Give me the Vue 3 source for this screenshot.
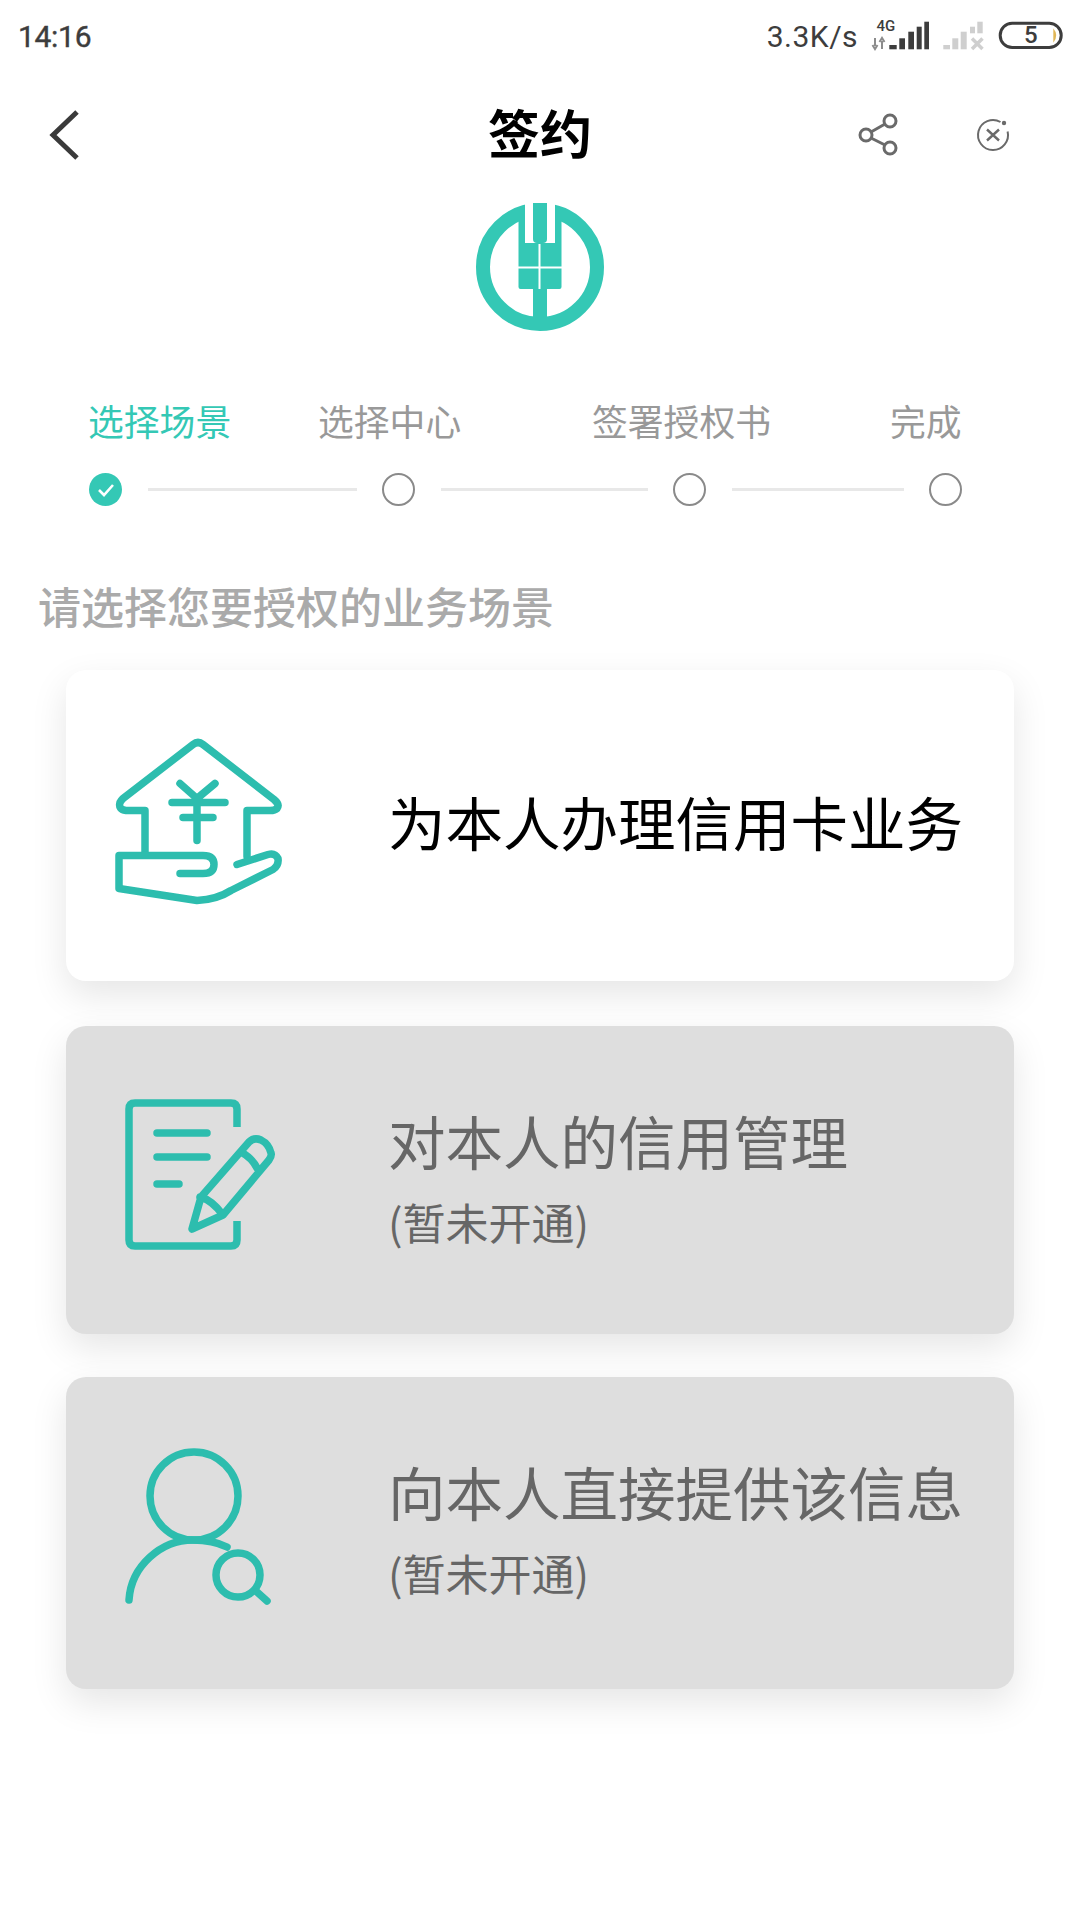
<script setup>
const steps = [
  { label: '选择场景', active: true },
  { label: '选择中心' },
  { label: '签署授权书' },
  { label: '完成' },
]
</script>

<template>
  <main class="page">
    <div class="status-bar">
      <span class="time">14:16</span>
      <div class="status-right">
        <span class="speed">3.3K/s</span>
        <svg class="status-icons" width="212" height="40" viewBox="0 0 212 40">
          <text x="16.500" y="14.700" class="net-text">4G</text>
          <path d="M15 22v8M12.500 29l2.500 4 2.500-4M22 33v-8M19.500 26l2.500-4 2.500 4" fill="none" stroke="#8c8c8c" stroke-width="2" />
          <g fill="#3d3d3d">
            <rect x="29.300" y="29" width="7.400" height="4.300" />
            <rect x="39.300" y="22.300" width="5.700" height="11" />
            <rect x="48.300" y="15.700" width="5.700" height="17.600" />
            <rect x="56.700" y="10.700" width="5" height="22.600" />
            <rect x="64.300" y="5.700" width="4.700" height="27.600" />
          </g>
          <g fill="#cfcfcf">
            <rect x="83.300" y="29" width="6.700" height="4.300" />
            <rect x="92.300" y="22.300" width="6" height="11" />
            <rect x="100.700" y="15.700" width="6" height="17.600" />
            <rect x="110" y="10.700" width="5" height="6.600" />
            <rect x="117.300" y="5.700" width="5.400" height="11.600" />
            <path d="M112 22.500l10.500 10.500M122.500 22.500L112 33" stroke="#cfcfcf" stroke-width="3.500" />
          </g>
          <rect x="140.200" y="7.200" width="61" height="24.300" rx="12" fill="none" stroke="#3d3d3d" stroke-width="3" />
          <path d="M193.300 12.300q6 7.200 0 14.400z" fill="#e0b656" />
          <text x="170.700" y="27.300" class="battery-text">5</text>
        </svg>
      </div>
    </div>

    <header class="nav">
      <svg class="back" width="34" height="52" viewBox="0 0 34 52">
        <path d="M30 3L6 26l24 23" fill="none" stroke="#3a3a3a" stroke-width="5" />
      </svg>
      <h1 class="title">签约</h1>
      <div class="nav-actions">
        <svg width="40" height="44" viewBox="0 0 40 44" fill="none" stroke="#6a6a6a" stroke-width="3">
          <circle cx="8" cy="22" r="6" />
          <circle cx="32" cy="8" r="6" />
          <circle cx="32" cy="35" r="6" />
          <path d="M13 19l14-8M13 25l14 7" />
        </svg>
        <svg width="36" height="36" viewBox="0 0 36 36" fill="none" stroke="#6a6a6a" stroke-width="2">
          <path d="M25.500 5A15 15 0 1 0 32.600 14.500" />
          <path d="M12 12.500l12 11M24 12.500l-12 11" stroke-width="2.400" />
          <circle cx="29" cy="6" r="2.200" fill="#6a6a6a" stroke="none" />
        </svg>
      </div>
    </header>

    <div class="logo-wrap">
      <svg width="128" height="130" viewBox="36 21 128 130">
        <circle cx="100" cy="86" r="57" fill="none" stroke="#34c8b5" stroke-width="14" />
        <rect x="85" y="15" width="30" height="48" rx="3" fill="#fff" />
        <path d="M78.500 28h6.500v34h30V28h6.500v78a2 2 0 0 1-2 2h-39a2 2 0 0 1-2-2z" fill="#34c8b5" />
        <path d="M93 22h14v36a4 4 0 0 1-4 4h-6a4 4 0 0 1-4-4z" fill="#34c8b5" />
        <rect x="93" y="108" width="14" height="32" fill="#34c8b5" />
        <path d="M99.500 63v45M78 86.500h44" stroke="#fff" stroke-width="2" />
      </svg>
    </div>

    <div class="step-labels">
      <span v-for="step in steps" :key="step.label" class="step-label" :class="{ active: step.active }">{{ step.label }}</span>
    </div>
    <div class="step-dots">
      <span class="dot done">
        <svg width="33" height="33" viewBox="0 0 33 33">
          <circle cx="16.500" cy="16.500" r="16.500" fill="#34c8b5" />
          <path d="M10 17l5 5 9-10" fill="none" stroke="#fff" stroke-width="2.600" />
        </svg>
      </span>
      <span class="line"></span>
      <span class="dot"></span>
      <span class="line"></span>
      <span class="dot"></span>
      <span class="line"></span>
      <span class="dot"></span>
    </div>

    <p class="prompt">请选择您要授权的业务场景</p>

    <section class="cards">
      <div class="card card-first">
        <svg class="card-icon" width="230" height="200" viewBox="0 5.500 230 200" fill="none" stroke="#2dbdae" stroke-width="7.500" stroke-linecap="round" stroke-linejoin="round">
          <path d="M55 133V90H36q-8-1-6-8 1-2 3-4l70-54q5-4 10 0l71 55q6 5 3 9-2 2-7 2h-23v46" />
          <path d="M90 63l17 15 18-15M82 82h53M93 97h30M107 78v42" />
          <path d="M147 144l31-10q7-2 10 4 1 7-5 11l-42 21q-14 9-34 10l-78-12v-33h84q11 0 11 9t-11 9H90" />
        </svg>
        <div class="card-text">
          <div class="card-title">为本人办理信用卡业务</div>
        </div>
      </div>

      <div class="card card-off">
        <svg class="card-icon" width="230" height="200" viewBox="-10 0 230 200" fill="none" stroke="#2dbdae" stroke-width="7.500" stroke-linecap="round" stroke-linejoin="round">
          <path d="M137 47V29q0-6-6-6H35q-6 0-6 6v131q0 6 6 6h96q6 0 6-6v-19" stroke-linecap="butt" />
          <path d="M57 53h50M57 77h50M57 104h22" />
          <path d="M92 149l9-32 48-55q5-5 12-2 8 4 10 13 1 3-2 7l-46 55zM100 117q12 3 23 18M141 72q11 6 16 16" />
        </svg>
        <div class="card-text">
          <div class="card-title">对本人的信用管理</div>
          <div class="card-sub">(暂未开通)</div>
        </div>
      </div>

      <div class="card card-off">
        <svg class="card-icon" width="230" height="200" viewBox="-10 3 230 200" fill="none" stroke="#2dbdae" stroke-width="7.500" stroke-linecap="round" stroke-linejoin="round">
          <circle cx="94" cy="66" r="44" />
          <path d="M29 170c2-34 32-60 64-60 12 0 24 2 34 7" />
          <circle cx="138" cy="145" r="22" />
          <path d="M157 162l10 9" />
        </svg>
        <div class="card-text">
          <div class="card-title">向本人直接提供该信息</div>
          <div class="card-sub">(暂未开通)</div>
        </div>
      </div>
    </section>
  </main>
</template>

<style>
html,
body {
  background: #fff;
}
</style>

<style scoped>
.page {
  width: 1080px;
  height: 1920px;
  overflow: hidden;
  background: #fff;
  font-family: "Noto Sans CJK SC", "Noto Sans", sans-serif;
}

.status-bar {
  height: 72px;
  display: flex;
  justify-content: space-between;
  align-items: center;
  padding: 0 8px 0 18px;
  color: #3d3d3d;
  font-family: Roboto, sans-serif;
}

.time {
  font-size: 30px;
  font-weight: 400;
  -webkit-text-stroke: 0.4px #3d3d3d;
  letter-spacing: -0.3px;
}

.status-right {
  display: flex;
  align-items: center;
}

.speed {
  font-size: 30px;
  letter-spacing: 0.5px;
}

.status-icons {
  margin-left: 2px;
}

.net-text {
  font-size: 15px;
  font-weight: 500;
  fill: #3d3d3d;
}

.battery-text {
  font-size: 24px;
  font-weight: 500;
  fill: #3d3d3d;
  text-anchor: middle;
}

.nav {
  height: 126px;
  display: grid;
  grid-template-columns: 1fr auto 1fr;
  align-items: center;
  padding: 0 69px;
}

.back {
  margin-left: -22px;
}

.title {
  margin: 0;
  padding-bottom: 7px;
  font-size: 52px;
  font-weight: 700;
  color: #000;
  line-height: 1;
}

.nav-actions {
  display: flex;
  justify-content: flex-end;
  align-items: center;
  gap: 77px;
}

.logo-wrap {
  display: flex;
  justify-content: center;
  margin-top: 4px;
}

.step-labels {
  display: grid;
  grid-template-columns: 230px 274px 298px auto;
  padding-left: 88px;
  margin-top: 62px;
}

.step-label {
  font-size: 35.800px;
  line-height: 52px;
  color: #999;
  white-space: nowrap;
}

.step-label.active {
  color: #34c8b5;
}

.step-dots {
  display: grid;
  grid-template-columns: 33px 209px 33px 207px 33px 172px 33px;
  column-gap: 25.500px;
  align-items: center;
  padding-left: 89px;
  margin-top: 27px;
}

.dot {
  width: 33px;
  height: 33px;
  box-sizing: border-box;
  border: 2px solid #8a8a8a;
  border-radius: 50%;
}

.dot.done {
  border: none;
}

.dot.done svg {
  display: block;
}

.line {
  height: 3px;
  background: #e8e8e8;
}

.prompt {
  margin: 69px 0 0 38px;
  font-size: 43px;
  line-height: 60px;
  font-weight: 500;
  color: #aaa;
}

.cards {
  margin: 35px 66px 0;
  display: flex;
  flex-direction: column;
}

.card {
  height: 311px;
  border-radius: 20px;
  background: #fff;
  box-shadow: 0 14px 36px rgba(0, 0, 0, 0.1);
  display: flex;
  align-items: center;
  padding-left: 24px;
}

.card:nth-child(2) {
  height: 308px;
  margin-top: 45px;
}

.card:nth-child(3) {
  height: 312px;
  margin-top: 43px;
}

.card-off {
  background: #dedede;
}

.card-icon {
  flex: none;
}

.card-text {
  margin-left: 68px;
  padding-bottom: 10px;
}

.card:nth-child(2) .card-text {
  padding-bottom: 6px;
}

.card-title {
  font-size: 57.500px;
  line-height: 70px;
  color: #000;
  white-space: nowrap;
}

.card-off .card-title {
  color: #666;
}

.card-sub {
  margin-top: 18px;
  font-size: 43px;
  line-height: 56px;
  color: #666;
}
</style>
